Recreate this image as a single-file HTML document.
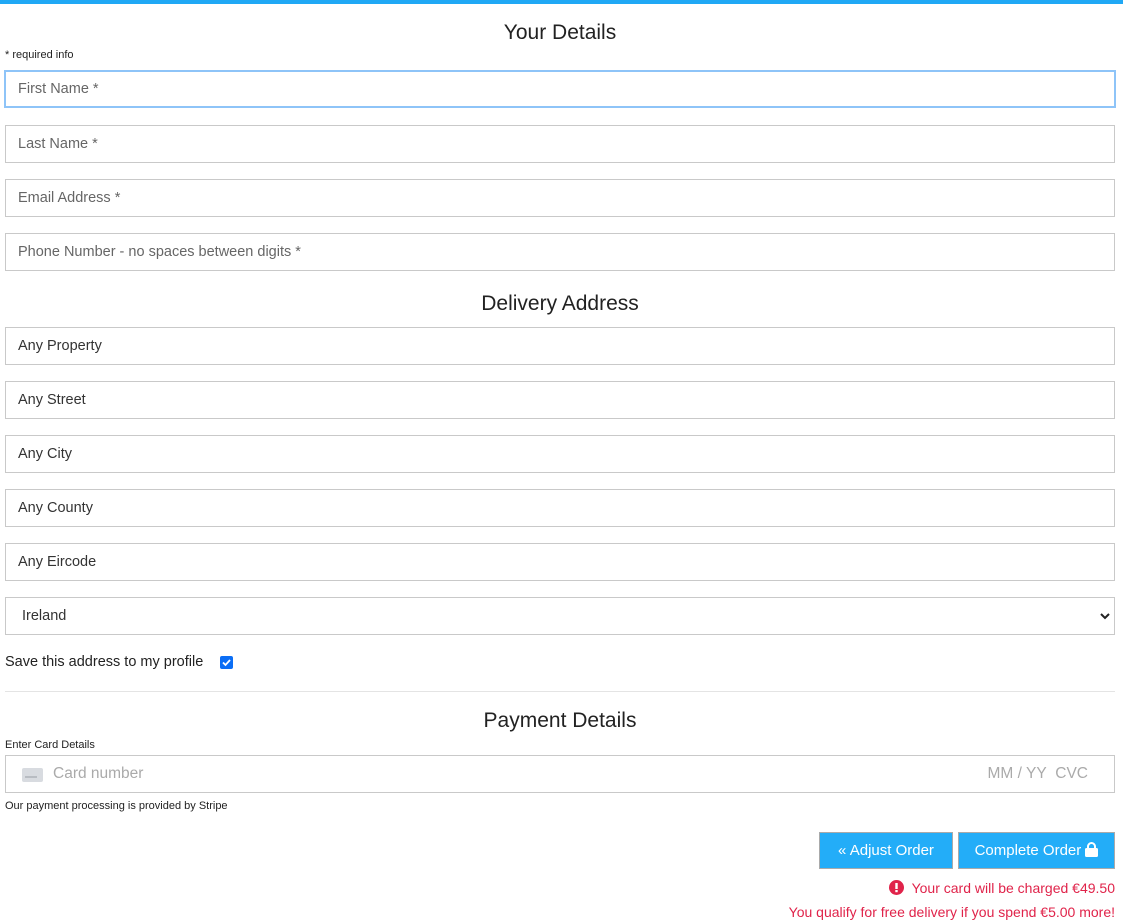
<!DOCTYPE html>
<html><head><meta charset="utf-8"><style>
body{margin:0;width:1123px;height:923px;position:relative;background:#fff;font-family:"Liberation Sans",sans-serif;color:#222;overflow:hidden}
.top{position:absolute;left:0;top:0;width:1123px;height:4px;background:#20a8f5}
.h{position:absolute;left:0;width:1120px;text-align:center;font-size:21px;color:#222}
.in{position:absolute;left:5px;height:36px;border:1px solid #c9c9c9;box-sizing:content-box;font-size:14.5px;line-height:36px;padding-left:12px;width:1096px;color:#333}
.ph{color:#666}
.sm{position:absolute;left:5px;font-size:11px;color:#222}
.btn{position:absolute;top:832px;height:37px;background:#23adf8;border:1px solid #aaa;color:#fff;font-size:15px;line-height:36px;text-align:center;box-sizing:border-box}
.red{position:absolute;right:8px;color:#e0234a;font-size:14px}
</style></head><body>
<div class="top"></div>
<div class="h" style="top:21px">Your Details</div>
<div class="sm" style="top:49px">* required info</div>
<div class="in ph" style="top:70px;border:2px solid #8ec4f8;height:34px;line-height:34px;left:4px">First Name *</div>
<div class="in ph" style="top:125px">Last Name *</div>
<div class="in ph" style="top:179px">Email Address *</div>
<div class="in ph" style="top:233px">Phone Number - no spaces between digits *</div>
<div class="h" style="top:292px">Delivery Address</div>
<div class="in" style="top:327px">Any Property</div>
<div class="in" style="top:381px">Any Street</div>
<div class="in" style="top:435px">Any City</div>
<div class="in" style="top:489px">Any County</div>
<div class="in" style="top:543px">Any Eircode</div>
<div class="in" style="top:597px;padding-left:16px;width:1092px">Ireland<svg style="position:absolute;right:4px;top:14px" width="10" height="8" viewBox="0 0 10 8"><path d="M1 2l4 4 4-4" stroke="#222" stroke-width="2" fill="none"/></svg></div>
<div style="position:absolute;left:5px;top:654px;font-size:14.5px">Save this address to my profile</div>
<div style="position:absolute;left:220px;top:656px;width:13px;height:13px;background:#0b6ef5;border-radius:2px"><svg width="13" height="13" viewBox="0 0 13 13"><path d="M3 6.5l2.5 2.5 4.5-5" stroke="#fff" stroke-width="1.8" fill="none"/></svg></div>
<div style="position:absolute;left:5px;top:691px;width:1110px;height:1px;background:#e4e4e4"></div>
<div class="h" style="top:709px">Payment Details</div>
<div class="sm" style="top:739px">Enter Card Details</div>
<div class="in" style="top:755px;color:#aaa;font-size:15.5px;padding-left:0;width:1108px">
<div style="position:absolute;left:16px;top:12px;width:21px;height:14px;background:#d8dbe0;border-radius:2px"><div style="position:absolute;left:3px;top:8px;width:12px;height:2px;background:#b8bcc2"></div></div>
<span style="position:absolute;left:47px">Card number</span><span style="position:absolute;right:26px">MM / YY&nbsp; CVC</span></div>
<div class="sm" style="top:800px">Our payment processing is provided by Stripe</div>
<div class="btn" style="left:819px;width:134px">&#171; Adjust Order</div>
<div class="btn" style="left:958px;width:157px">Complete Order <svg width="13" height="15" viewBox="0 0 13 15" style="vertical-align:-2px"><rect x="0" y="6" width="13" height="9" rx="1.5" fill="#fff"/><path d="M3 6.5V4.5a3.5 3.5 0 0 1 7 0v2" stroke="#fff" stroke-width="2" fill="none"/></svg></div>
<div class="red" style="top:880px"><svg width="15" height="15" viewBox="0 0 15 15" style="vertical-align:-2px"><circle cx="7.5" cy="7.5" r="7.5" fill="#e0234a"/><rect x="6.3" y="3" width="2.4" height="6" fill="#fff"/><rect x="6.3" y="10" width="2.4" height="2.2" fill="#fff"/></svg>&nbsp; Your card will be charged €49.50</div>
<div class="red" style="top:904px">You qualify for free delivery if you spend €5.00 more!</div>
</body></html>
